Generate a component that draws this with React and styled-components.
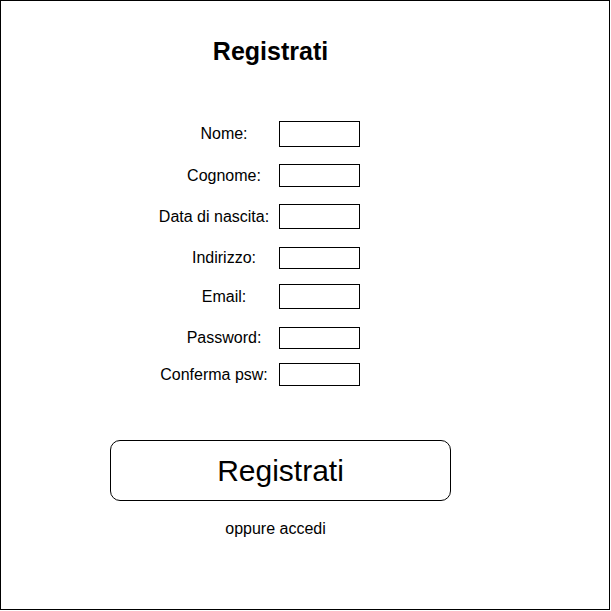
import React from 'react';
import styled, { createGlobalStyle } from 'styled-components';

// --- Global ---
const GlobalStyle = createGlobalStyle`
  html, body {
    margin: 0;
    padding: 0;
    background: #fff;
  }
  * {
    box-sizing: border-box;
  }
`;

// --- Styled Components ---
const Frame = styled.div`
  width: 610px;
  height: 610px;
  border: 1px solid #000;
  background: #fff;
  font-family: 'Liberation Sans', Arial, sans-serif;
  color: #000;
`;

const Content = styled.div`
  display: flex;
  flex-direction: column;
  width: 341px;
  margin-left: 109px;
  padding-top: 35px;
`;

const Title = styled.h1`
  margin: 0 20px 0 0;
  font-size: 25px;
  line-height: 30px;
  font-weight: bold;
  text-align: center;
`;

const Form = styled.form`
  display: flex;
  flex-direction: column;
  margin: 37px 0 0 59px;
`;

const Row = styled.div`
  display: flex;
  align-items: center;
  height: ${({ $h }) => $h}px;
  margin-top: ${({ $gap }) => $gap}px;
`;

const Label = styled.label`
  display: flex;
  justify-content: center;
  width: 110px;
  padding-right: ${({ $shift }) => $shift || 0}px;
  font-size: 16px;
  white-space: nowrap;
`;

const Field = styled.input`
  width: 81px;
  height: 100%;
  margin: 0;
  padding: 0 4px;
  border: 1px solid #000;
  border-radius: 0;
  background: #fff;
  font: inherit;
  font-size: 14px;
  outline: none;
`;

const SubmitButton = styled.button`
  height: 61px;
  margin-top: 54px;
  border: 1px solid #000;
  border-radius: 10px;
  background: #fff;
  color: #000;
  font-family: inherit;
  font-size: 30px;
  cursor: pointer;
`;

const AltLink = styled.a`
  margin: 19px 10px 0 0;
  font-size: 16px;
  line-height: 18px;
  text-align: center;
  color: #000;
  text-decoration: none;
  cursor: pointer;
`;

const fields = [
  { id: 'nome', label: 'Nome:', h: 26, gap: 18 },
  { id: 'cognome', label: 'Cognome:', h: 23, gap: 17 },
  { id: 'nascita', label: 'Data di nascita:', h: 25, gap: 17, shift: 20 },
  { id: 'indirizzo', label: 'Indirizzo:', h: 22, gap: 18 },
  { id: 'email', label: 'Email:', type: 'email', h: 25, gap: 15 },
  { id: 'password', label: 'Password:', type: 'password', h: 22, gap: 18 },
  { id: 'conferma', label: 'Conferma psw:', type: 'password', h: 23, gap: 14, shift: 20 },
];

// --- Main Component ---
function App() {
  return (
    <>
      <GlobalStyle />
      <Frame>
        <Content>
          <Title>Registrati</Title>
          <Form onSubmit={e => e.preventDefault()}>
            {fields.map(f => (
              <Row key={f.id} $h={f.h} $gap={f.gap}>
                <Label htmlFor={f.id} $shift={f.shift}>{f.label}</Label>
                <Field id={f.id} type={f.type || 'text'} />
              </Row>
            ))}
          </Form>
          <SubmitButton type="button">Registrati</SubmitButton>
          <AltLink>oppure accedi</AltLink>
        </Content>
      </Frame>
    </>
  );
}

export default App;
